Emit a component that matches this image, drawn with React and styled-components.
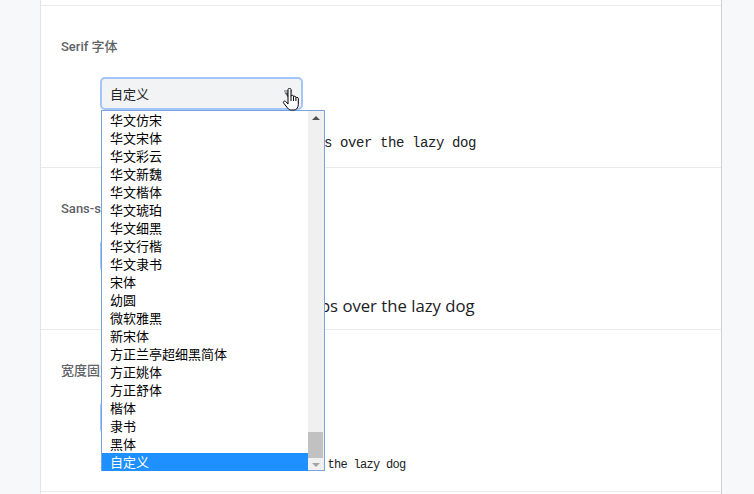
import React from 'react'
import styled, { createGlobalStyle } from 'styled-components'

const GlobalStyle = createGlobalStyle`
  html, body {
    margin: 0;
    padding: 0;
    background: #f7f8fa;
    overflow: hidden;
  }
`

const Page = styled.div`
  width: 754px;
  height: 494px;
  overflow: hidden;
  background: #f7f8fa;
`

const Card = styled.div`
  box-sizing: border-box;
  margin-left: 40px;
  width: 682px;
  min-height: 494px;
  padding-top: 5px;
  background: #fff;
  border-left: 1px solid #e2e3e5;
  border-right: 1px solid #cfd0d2;
  display: flex;
  flex-direction: column;
`

const Row = styled.section`
  box-sizing: border-box;
  height: 162px;
  border-top: 1px solid #e9eaec;
  padding: 31px 20px 0;
  display: flex;
  flex-direction: column;
  align-items: flex-start;
`

const Label = styled.div`
  font: 500 13px/20px Roboto, 'Noto Sans CJK SC', sans-serif;
  color: #5f6368;
`

const Controls = styled.div`
  margin: 20px 0 0 39px;
  display: flex;
  flex-direction: column;
  align-items: flex-start;
`

const SelectWrap = styled.div`
  position: relative;
  width: 203px;
  height: 33px;
`

const SelectBox = styled.div`
  box-sizing: border-box;
  height: 33px;
  display: flex;
  align-items: center;
  justify-content: space-between;
  padding: 0 8px;
  background: #f1f3f4;
  border: 2px solid #a4c5f7;
  border-radius: 5px;
  font: 13px Roboto, 'Noto Sans CJK SC', sans-serif;
  color: #202124;
`

const Sample = styled.div`
  margin-top: 21px;
  height: ${p => (p.small ? 20 : 24)}px;
  display: flex;
  align-items: center;
  white-space: nowrap;
  color: #202124;
  font-family: ${p => (p.sans ? "'Open Sans', sans-serif" : "'Liberation Mono', monospace")};
  font-size: ${p => p.size}px;
  letter-spacing: ${p => p.spacing || 0}px;
`

const Listbox = styled.div`
  position: absolute;
  top: 33px;
  left: 1px;
  z-index: 5;
  box-sizing: border-box;
  width: 224px;
  height: 361px;
  display: flex;
  background: #fff;
  border: 1px solid #7ba2e0;
`

const Options = styled.ul`
  flex: 1;
  list-style: none;
  margin: 0;
  padding: 0;
`

const Option = styled.li`
  height: 18px;
  padding-left: 8px;
  font: 13px/18px 'Noto Sans CJK SC', sans-serif;
  color: ${p => (p.selected ? '#fff' : '#000')};
  background: ${p => (p.selected ? '#1e90ff' : 'transparent')};
`

const Scrollbar = styled.div`
  width: 16px;
  background: #f0f0f0;
  display: flex;
  flex-direction: column;
  align-items: center;
  justify-content: space-between;
  padding: 5px 0 3px;
  box-sizing: border-box;
`

const Track = styled.div`
  flex: 1;
  width: 100%;
  display: flex;
  align-items: flex-end;
  padding-bottom: 1px;
`

const Thumb = styled.div`
  width: 15px;
  height: 26px;
  background: #c1c1c1;
`

const Arrow = styled.div`
  width: 0;
  height: 0;
  border-left: 4px solid transparent;
  border-right: 4px solid transparent;
  ${p => (p.up
    ? 'border-bottom: 4px solid #505050; margin-bottom: 4px;'
    : 'border-top: 4px solid #a3a3a3; margin-top: 4px;')}
`

const Cursor = styled.svg`
  position: absolute;
  left: 182px;
  top: 11px;
  z-index: 6;
`

const fonts = [
  '华文仿宋', '华文宋体', '华文彩云', '华文新魏', '华文楷体', '华文琥珀', '华文细黑',
  '华文行楷', '华文隶书', '宋体', '幼圆', '微软雅黑', '新宋体', '方正兰亭超细黑简体',
  '方正姚体', '方正舒体', '楷体', '隶书', '黑体', '自定义'
]

const HandCursor = () => (
  <Cursor width='19' height='25' viewBox='0 0 19 25'>
    <path
      d='M6 1.6C6 .8 6.7.2 7.5.2S9 .8 9 1.6V8.3C9.1 7.6 9.6 7.2 10.3 7.2S11.5 7.6 11.5 8.3V9.2C11.6 8.6 12.1 8.2 12.7 8.2S13.9 8.7 13.9 9.3V10.1C14 9.6 14.5 9.3 15 9.3 15.7 9.3 16.3 9.8 16.3 10.5V16.4C16.3 19.6 14.4 22 11.8 22H9.2C7.7 22 6.6 21.3 5.7 20.2L1.7 15.1C1.2 14.5 1.3 13.7 1.9 13.3S3.3 13 3.8 13.6L6 16Z'
      fill='#fff'
      stroke='#000'
      strokeWidth='1'
      strokeLinejoin='round'
    />
    <path d='M9 8.3V13M11.5 9.2V13M13.9 10.1V13' stroke='#000' strokeWidth='1' />
  </Cursor>
)

const SelectArrow = () => (
  <svg width='10' height='8' viewBox='0 0 10 8'>
    <path d='M1 1H9M2.5 3L5 6.5 7.5 3Z' stroke='#5f6368' strokeWidth='1.2' fill='#5f6368' />
  </svg>
)

const FontSelect = ({ open }) => (
  <SelectWrap>
    <SelectBox>
      <span>自定义</span>
      <SelectArrow />
    </SelectBox>
    {open && (
      <>
        <HandCursor />
        <Listbox>
          <Options>
            {fonts.map(f => (
              <Option key={f} selected={f === '自定义'}>{f}</Option>
            ))}
          </Options>
          <Scrollbar>
            <Arrow up />
            <Track><Thumb /></Track>
            <Arrow />
          </Scrollbar>
        </Listbox>
      </>
    )}
  </SelectWrap>
)

const sample = 'The quick brown fox jumps over the lazy dog'

const App = () => (
  <Page>
    <GlobalStyle />
    <Card>
      <Row>
        <Label>Serif 字体</Label>
        <Controls>
          <FontSelect open />
          <Sample size={14} spacing={-0.4}>16: {sample}</Sample>
        </Controls>
      </Row>
      <Row>
        <Label>Sans-serif 字体</Label>
        <Controls>
          <FontSelect />
          <Sample sans size={16.7}>16: {sample}</Sample>
        </Controls>
      </Row>
      <Row>
        <Label>宽度固定字体</Label>
        <Controls>
          <FontSelect />
          <Sample small size={12} spacing={-0.7}>13: {sample}</Sample>
        </Controls>
      </Row>
      <Row />
    </Card>
  </Page>
)

export default App
